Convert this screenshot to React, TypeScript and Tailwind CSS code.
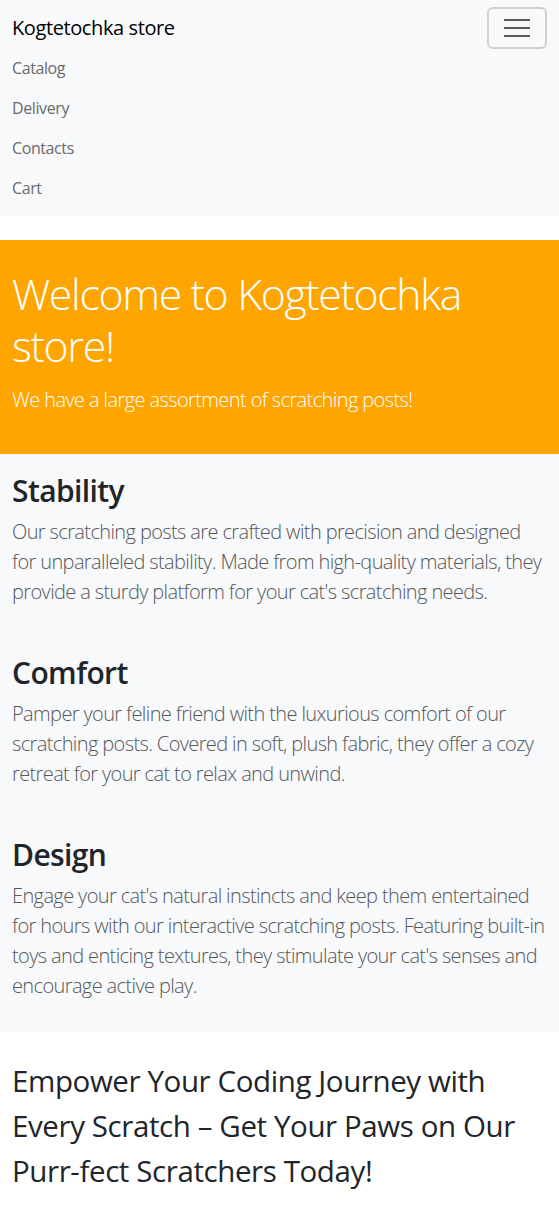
import React from "react";

const font = { fontFamily: '"Open Sans", "Noto Sans", sans-serif' };

const features = [
  {
    h: "Stability",
    lines: [
      "Our scratching posts are crafted with precision and designed",
      "for unparalleled stability. Made from high-quality materials, they",
      "provide a sturdy platform for your cat's scratching needs.",
    ],
  },
  {
    h: "Comfort",
    lines: [
      "Pamper your feline friend with the luxurious comfort of our",
      "scratching posts. Covered in soft, plush fabric, they offer a cozy",
      "retreat for your cat to relax and unwind.",
    ],
  },
  {
    h: "Design",
    lines: [
      "Engage your cat's natural instincts and keep them entertained",
      "for hours with our interactive scratching posts. Featuring built-in",
      "toys and enticing textures, they stimulate your cat's senses and",
      "encourage active play.",
    ],
  },
];

export default function App() {
  return (
    <div style={font} className="w-full overflow-hidden bg-white text-[#212529] tracking-[-0.025em]">
      <nav className="bg-[#f8f9fa] px-3 py-2">
        <div className="flex h-10 items-center justify-between">
          <span className="text-[20px] leading-[30px] text-black">Kogtetochka store</span>
          <button className="-my-px flex h-[42px] w-[60px] flex-col items-center justify-center gap-[6px] rounded-md border-2 border-[#cfd0d1]">
            <span className="block h-[2px] w-[26px] bg-[#5a5a5a]" />
            <span className="block h-[2px] w-[26px] bg-[#5a5a5a]" />
            <span className="block h-[2px] w-[26px] bg-[#5a5a5a]" />
          </button>
        </div>
        <ul className="flex flex-col">
          {["Catalog", "Delivery", "Contacts", "Cart"].map((t) => (
            <li key={t} className="py-2 text-[16px] leading-6 text-[#6a6b6c]">
              {t}
            </li>
          ))}
        </ul>
      </nav>

      <section className="mt-6 bg-[#ffa500] px-3 pb-[39px] pt-[28px] text-white">
        <h1 className="text-[42.8px] font-light leading-[52px] tracking-[-0.031em]">
          Welcome to Kogtetochka
          <br />
          store!
        </h1>
        <p className="mt-[13px] text-[20px] font-light leading-[30px] tracking-[-0.03em]">
          We have a large assortment of scratching posts!
        </p>
      </section>

      <section className="bg-[#f8f9fa] px-3 pb-[31px] pt-[18px]">
        {features.map((f, i) => (
          <div key={f.h} className={i === 0 ? "" : "mt-[47px]"}>
            <h2 className="mb-[8px] text-[30px] font-semibold leading-[37px] tracking-[-0.02em]">{f.h}</h2>
            <p className="text-[20px] font-light leading-[30px] tracking-[-0.031em] text-[#55585b]">
              {f.lines.map((l, j) => (
                <span key={j} className="block whitespace-nowrap">
                  {l}
                </span>
              ))}
            </p>
          </div>
        ))}
      </section>

      <section className="px-3 pb-6 pt-[26px]">
        <p className="text-[29.5px] leading-[45px] text-[#212529]">
          <span className="block whitespace-nowrap">Empower Your Coding Journey with</span>
          <span className="block whitespace-nowrap">Every Scratch – Get Your Paws on Our</span>
          <span className="block whitespace-nowrap">Purr-fect Scratchers Today!</span>
        </p>
      </section>
    </div>
  );
}
